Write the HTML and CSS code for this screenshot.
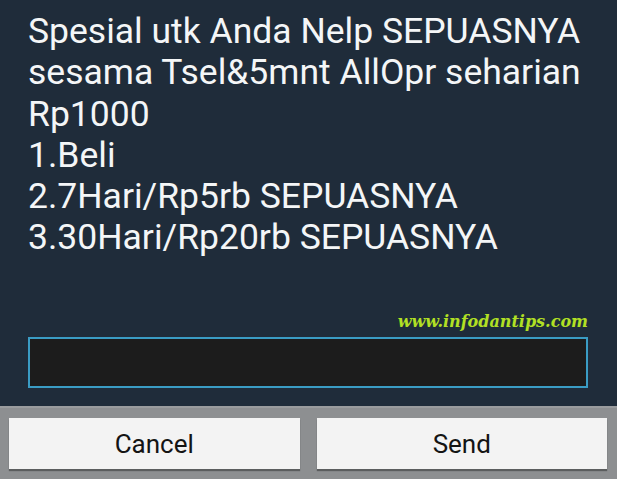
FILE: index.html
```html
<!DOCTYPE html>
<html lang="en">
<head>
  <meta charset="UTF-8" />
  <meta name="viewport" content="width=device-width, initial-scale=1.0"/>
  <title>USSD</title>
  <link rel="stylesheet" href="styles.css">
</head>
<body>
  <div class="dialog">
    <p class="message">
      Spesial utk Anda Nelp SEPUASNYA<br>
      sesama Tsel&amp;5mnt AllOpr seharian<br>
      Rp1000<br>
      1.Beli<br>
      2.7Hari/Rp5rb SEPUASNYA<br>
      3.30Hari/Rp20rb SEPUASNYA
    </p>
    <div class="watermark">www.infodantips.com</div>
    <div class="reply"></div>
  </div>
  <div class="buttons">
    <button class="btn">Cancel</button>
    <button class="btn">Send</button>
  </div>
</body>
</html>
```

FILE: styles.css
```css
body {
  margin: 0;
  font-family: Roboto, 'Noto Sans', sans-serif;
  background-color: #8d8f91;
  overflow: hidden;
}

.dialog {
  background-color: #1f2c3a;
  height: 406px;
  box-sizing: border-box;
  padding: 11px 29px 0 28px;
  display: flex;
  flex-direction: column;
}

.message {
  margin: 0;
  color: #f4f6f7;
  font-size: 35.5px;
  line-height: 41.3px;
  flex: 1;
}

.watermark {
  text-align: right;
  font-family: 'DejaVu Serif', serif;
  font-style: italic;
  font-weight: bold;
  font-size: 16px;
  color: #b2e024;
  margin-bottom: 6px;
}

.reply {
  height: 47px;
  background-color: #1c1c1c;
  border: 2px solid #3a9cc4;
  margin-bottom: 18px;
}

.buttons {
  display: grid;
  grid-template-columns: 1fr 1fr;
  gap: 17px;
  padding: 10px 10px 12px 9px;
  border-top: 2px solid #9a9c9e;
}

.btn {
  height: 51px;
  border: none;
  background-color: #f3f3f3;
  font-family: Roboto, 'Noto Sans', sans-serif;
  font-size: 26px;
  color: #141414;
  box-shadow: 0 2px 1px rgba(0, 0, 0, 0.35);
  padding: 0;
}
```
